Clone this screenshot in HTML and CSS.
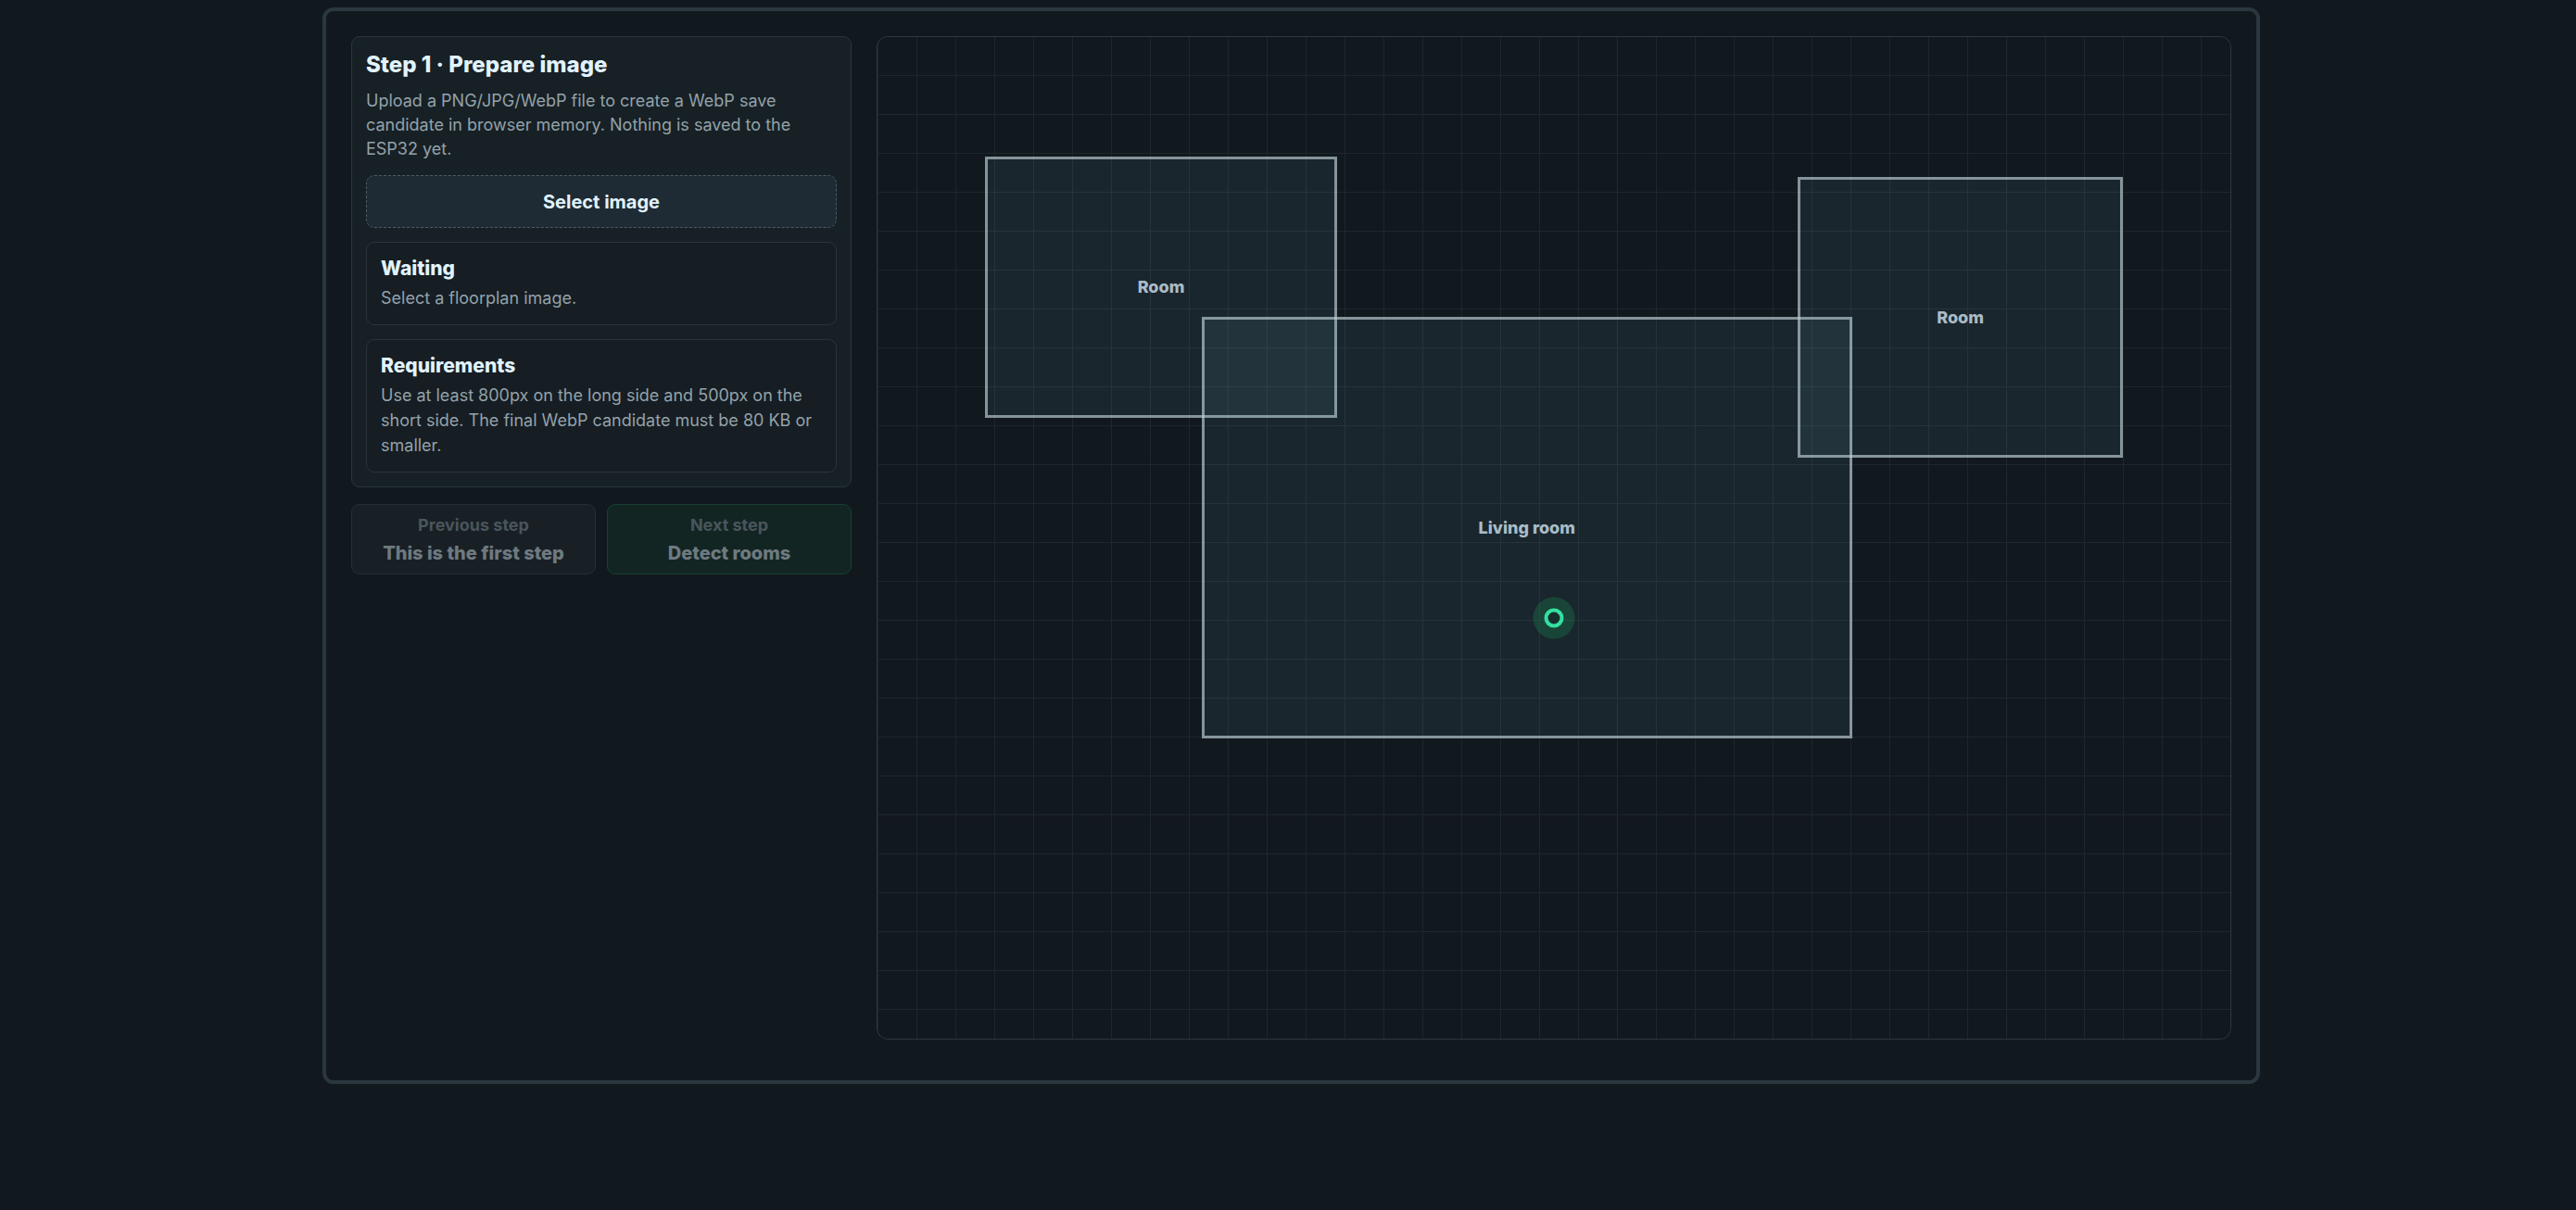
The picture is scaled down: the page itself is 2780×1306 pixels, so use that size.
FILE: index.html
```html
<!DOCTYPE html>
<html lang="en">
<head>
<meta charset="utf-8">
<meta name="viewport" content="width=device-width, initial-scale=1">
<title>Floorplan setup</title>
<link rel="stylesheet" href="styles.css">
</head>
<body>
<main class="wizard">
  <aside class="sidebar">
    <section class="panel">
      <header class="intro">
        <h1 class="panel-title">Step 1 · Prepare image</h1>
        <p class="panel-text">Upload a PNG/JPG/WebP file to create a WebP save candidate in browser memory. Nothing is saved to the ESP32 yet.</p>
      </header>
      <button class="upload" type="button">Select image</button>
      <section class="card">
        <h2 class="card-title">Waiting</h2>
        <p class="card-text">Select a floorplan image.</p>
      </section>
      <section class="card">
        <h2 class="card-title">Requirements</h2>
        <p class="card-text">Use at least 800px on the long side and 500px on the short side. The final WebP candidate must be 80 KB or smaller.</p>
      </section>
    </section>
    <nav class="steps">
      <button class="step" type="button" disabled>
        <span class="step-hint">Previous step</span>
        <span class="step-name">This is the first step</span>
      </button>
      <button class="step step-next" type="button" disabled>
        <span class="step-hint">Next step</span>
        <span class="step-name">Detect rooms</span>
      </button>
    </nav>
  </aside>
  <section class="plan" aria-label="Floorplan">
    <div class="room room-left">Room</div>
    <div class="room room-living">Living room</div>
    <div class="room room-right">Room</div>
    <div class="marker"></div>
  </section>
</main>
</body>
</html>
```
FILE: styles.css
```css
* { box-sizing: border-box; }

body {
  margin: 0;
  background: #11191f;
  color: #e1f3fd;
  font-family: Inter, "Liberation Sans", sans-serif;
  font-size: 18px;
}

h1, h2, p { margin: 0; }
button { font-family: inherit; }

.wizard {
  display: grid;
  grid-template-columns: 540px minmax(0, 1fr);
  align-items: start;
  gap: 27px;
  margin: 8px 341px 0 348px;
  padding: 27px 27px 44px;
  border: 4px solid #2b373f;
  border-radius: 12px;
}

.sidebar { display: grid; gap: 18px; }

.panel {
  display: grid;
  gap: 15px;
  padding: 15px;
  border: 1px solid #2a363c;
  border-radius: 9px;
  background: #172025;
}

.intro { display: grid; gap: 11px; }
.panel-title { font-size: 24px; line-height: 30px; font-weight: 800; }
.panel-text { line-height: 26px; color: #93a2aa; }

.upload {
  height: 57px;
  border: 1px dashed #4b5b64;
  border-radius: 9px;
  background: #1e2b34;
  color: inherit;
  font-size: 20px;
  font-weight: 700;
}

.card {
  display: grid;
  gap: 5px;
  padding: 15px;
  border: 1px solid #2a343b;
  border-radius: 9px;
  background: #161d23;
}

.card-title { font-size: 21px; line-height: 26px; font-weight: 800; }
.card-text { line-height: 27px; color: #93a2aa; }

.steps { display: grid; grid-template-columns: 1fr 1fr; gap: 12px; }

.step {
  display: grid;
  align-content: center;
  gap: 5px;
  height: 76px;
  padding: 0;
  border: 1px solid #242f35;
  border-radius: 9px;
  background: #182026;
}

.step-hint { font-size: 18px; line-height: 24px; font-weight: 700; color: #4a555b; }
.step-name { font-size: 20px; line-height: 26px; font-weight: 800; color: #6f7a80; }
.step-next { border-color: #17402f; background: #122523; }

.plan {
  position: relative;
  aspect-ratio: 27 / 20;
  border-radius: 12px;
  background:
    linear-gradient(#1d272c 1px, transparent 1px) 1px 0 / 42px 42px,
    linear-gradient(90deg, #1d272c 1px, transparent 1px) 1px 0 / 42px 42px,
    #11181e;
  box-shadow: inset 0 0 0 1px #2d383e;
}

.room {
  position: absolute;
  display: grid;
  place-items: center;
  border: 3px solid rgba(190, 208, 214, 0.65);
  background: rgba(145, 203, 226, 0.08);
  color: #a9bcc8;
  font-weight: 800;
}

.room-left { left: 8%; top: 12%; width: 26%; height: 26%; }
.room-living { left: 24%; top: 28%; width: 48%; height: 42%; }
.room-right { left: 68%; top: 14%; width: 24%; height: 28%; }

.marker {
  position: absolute;
  left: 50%;
  top: 58%;
  width: 21px;
  height: 21px;
  border: 4px solid #34e0a1;
  border-radius: 50%;
  background: #17302f;
  box-shadow: 0 0 0 12px rgba(24, 144, 84, 0.3);
  transform: translate(-50%, -50%);
}
```
